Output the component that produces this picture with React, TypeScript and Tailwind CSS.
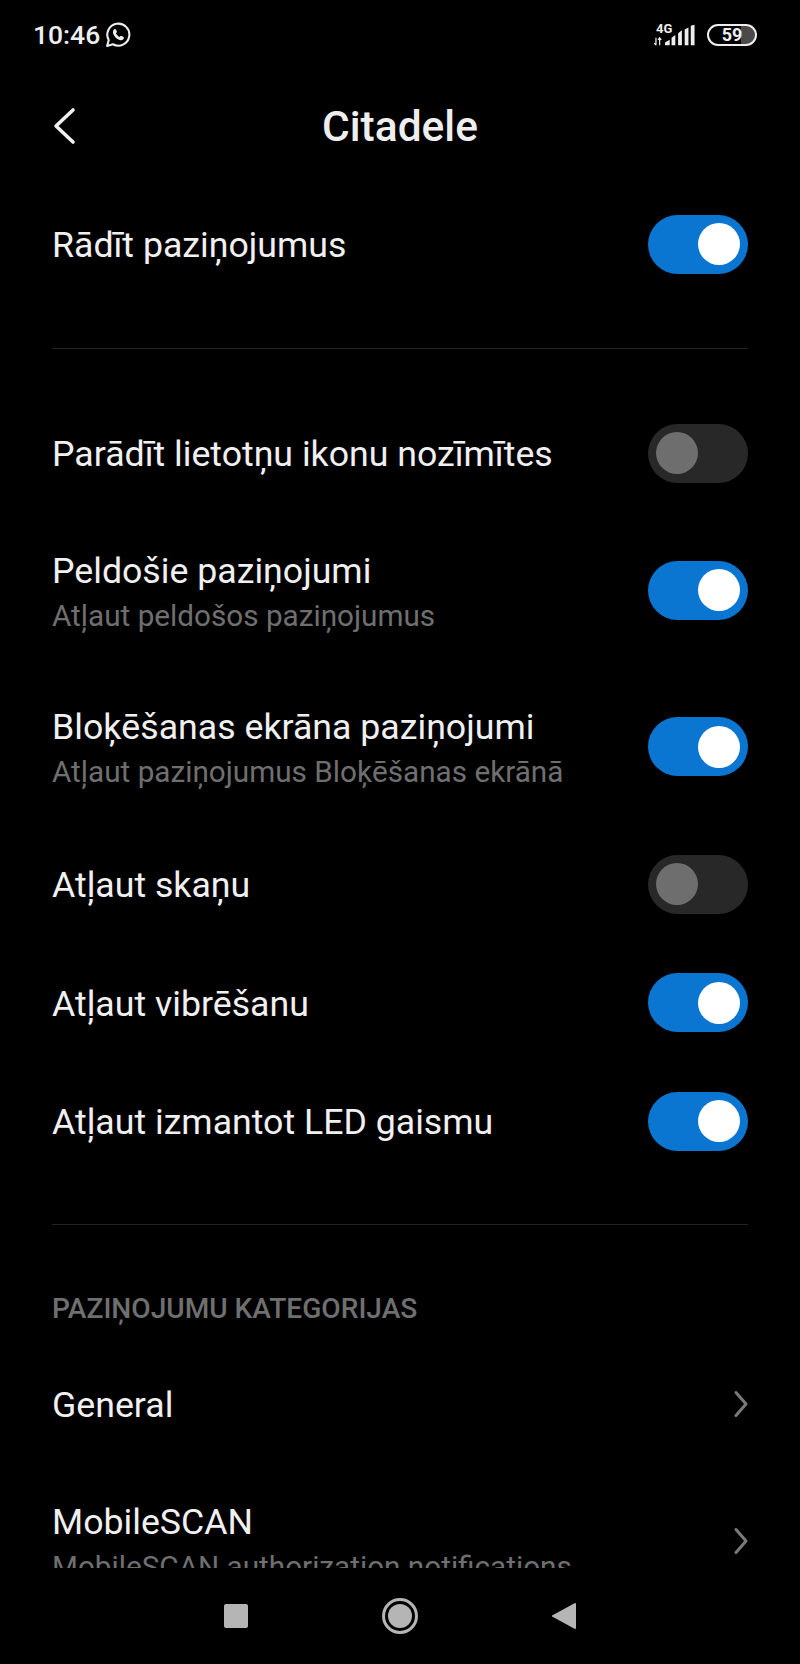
import React from 'react'

const Toggle = ({ on }: { on: boolean }) => {
    return (
        <div className={on ? 'flex h-[59px] w-[100px] shrink-0 items-center justify-end rounded-full bg-[#0b76d1] px-[8px]' : 'flex h-[59px] w-[100px] shrink-0 items-center justify-start rounded-full bg-[#282828] px-[8px]'}>
            <div className={on ? 'h-[42px] w-[42px] rounded-full bg-white' : 'h-[42px] w-[42px] rounded-full bg-[#6e6e6e]'} />
        </div>
    )
}

const Row = ({ title, sub, on, height }: { title: string; sub?: string; on: boolean; height: string }) => {
    return (
        <div className={`flex items-center justify-between ${height}`}>
            <div className="pt-[2px]">
                <div className="text-[35.7px] leading-[46px] text-[#f0f0f0]">{title}</div>
                {sub && <div className="mt-[3px] text-[29.7px] leading-[38px] text-[#6f6f6f]">{sub}</div>}
            </div>
            <Toggle on={on} />
        </div>
    )
}

const Chevron = () => (
    <svg width="18" height="28" viewBox="0 0 18 28" fill="none" stroke="#7a7a7a" strokeWidth="3" strokeLinecap="round" strokeLinejoin="round">
        <path d="M6 2.500l10 11.500-10 11.500" />
    </svg>
)

export default function App() {
    return (
        <div className="flex h-[1664px] w-[800px] flex-col overflow-hidden bg-black font-['Roboto',sans-serif]">
            {/* Status bar */}
            <div className="flex h-[70px] shrink-0 items-center justify-between pl-[33px] pr-[43px]">
                <div className="flex items-center gap-[5px]">
                    <span className="text-[26.5px] font-medium leading-none text-[#eeeeee]">10:46</span>
                    <svg width="26" height="26" viewBox="0 0 25 25" fill="none">
                        <path d="M2 23l1.600-5.600A10.600 10.600 0 1 1 7.600 21.400L2 23z" stroke="#eeeeee" strokeWidth="2" strokeLinejoin="round" />
                        <path d="M8.600 7.200c.6-.6 1.600-.6 2 .2l.8 1.600c.2.500 0 1-.4 1.400l-.5.500c.7 1.500 1.900 2.700 3.500 3.500l.6-.6c.4-.4.9-.5 1.400-.3l1.600.8c.7.4.8 1.300.2 2-1 1.100-2.400 1.400-3.800.9-3-1-5.300-3.400-6.200-6.200-.4-1.400 0-2.800.8-3.800z" fill="#eeeeee" />
                    </svg>
                </div>
                <div className="flex items-center gap-[12px]">
                    <div className="relative flex h-[22px] w-[42px] items-end gap-[2px]">
                        <span className="absolute left-[3px] top-[-2px] text-[13px] font-bold leading-[13px] text-[#eeeeee]">4G</span>
                        <svg width="10" height="9" viewBox="0 0 10 11" stroke="#eeeeee" strokeWidth="1.500" fill="none">
                            <path d="M2.500 1v9M0.500 7.500l2 2.500M7 10V1M5 3.500L7 1l2 2.500" />
                        </svg>
                        <svg width="30" height="22" viewBox="0 0 32 22" fill="#eeeeee">
                            <path d="M0 22v-3l5-3v6zM7 22v-8l4-3v11zM14 22V9l4-3v16zM21 22V5l4-2v19zM27.500 22V1l4-1v22z" />
                        </svg>
                    </div>
                    <div className="flex h-[22px] w-[50px] items-center justify-center overflow-hidden rounded-full border-2 border-[#eeeeee] bg-[linear-gradient(to_right,#000_0%,#000_70%,#4a4a4a_70%,#4a4a4a_100%)]">
                        <span className="text-[18px] font-bold leading-none text-[#eeeeee]">59</span>
                    </div>
                </div>
            </div>

            {/* Title bar */}
            <div className="relative flex h-[115px] shrink-0 items-center justify-center">
                <svg className="absolute left-[52px] top-[37px]" width="26" height="38" viewBox="0 0 26 38" fill="none" stroke="#f0f0f0" strokeWidth="3.600" strokeLinecap="round" strokeLinejoin="round">
                    <path d="M21 3L4 19l17 16" />
                </svg>
                <span className="text-[42.5px] font-medium leading-none text-[#eeeeee]">Citadele</span>
            </div>

            {/* Scrolling list */}
            <div className="min-h-0 flex-1 overflow-hidden px-[52px]">
                <Row title="Rādīt paziņojumus" on height="h-[118px]" />
                <div className="mt-[45px] h-px bg-[#242424]" />
                <div className="mt-[45px]">
                    <Row title="Parādīt lietotņu ikonu nozīmītes" on={false} height="h-[118px]" />
                    <Row title="Peldošie paziņojumi" sub="Atļaut peldošos paziņojumus" on height="h-[156px]" />
                    <Row title="Bloķēšanas ekrāna paziņojumi" sub="Atļaut paziņojumus Bloķēšanas ekrānā" on height="h-[157px]" />
                    <Row title="Atļaut skaņu" on={false} height="h-[118px]" />
                    <Row title="Atļaut vibrēšanu" on height="h-[119px]" />
                    <Row title="Atļaut izmantot LED gaismu" on height="h-[118px]" />
                </div>
                <div className="mt-[44px] h-px bg-[#242424]" />
                <div className="flex h-[120px] items-end pb-[17px] text-[28.100px] font-medium leading-[38px] text-[#6f6f6f]">PAZIŅOJUMU KATEGORIJAS</div>
                <div className="flex h-[118px] items-center justify-between">
                    <span className="pt-[2px] text-[35.7px] leading-[46px] text-[#f0f0f0]">General</span>
                    <Chevron />
                </div>
                <div className="flex h-[156px] items-center justify-between">
                    <div className="pt-[2px]">
                        <div className="text-[35.7px] leading-[46px] text-[#f0f0f0]">MobileSCAN</div>
                        <div className="mt-[3px] text-[29.7px] leading-[38px] text-[#6f6f6f]">MobileSCAN authorization notifications</div>
                    </div>
                    <Chevron />
                </div>
            </div>

            {/* Nav bar */}
            <div className="flex h-[96px] shrink-0 items-center justify-center gap-[134px]">
                <div className="h-[24px] w-[24px] rounded-[2px] bg-[#b5b5b5]" />
                <div className="flex h-[36px] w-[36px] items-center justify-center rounded-full border-[3px] border-[#b5b5b5]">
                    <div className="h-[24px] w-[24px] rounded-full bg-[#b5b5b5]" />
                </div>
                <svg width="24" height="28" viewBox="0 0 24 28" fill="#b5b5b5">
                    <path d="M23 1a1 1 0 0 1 1 1v24a1 1 0 0 1-1 1L1 15a1 1 0 0 1 0-2z" />
                </svg>
            </div>
        </div>
    )
}
